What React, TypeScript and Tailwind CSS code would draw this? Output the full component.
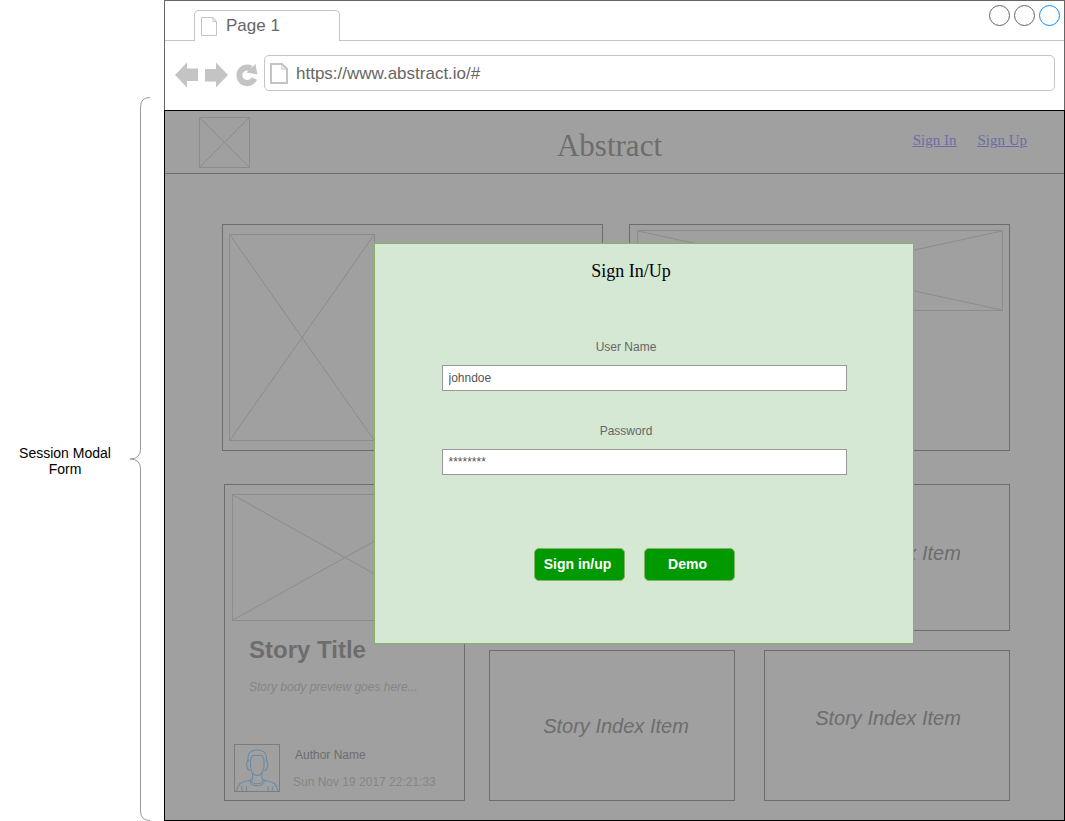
import type { ReactNode } from 'react';

function Placeholder({ className }: { className: string }) {
  return (
    <div className={`border border-[#8c8c8c] ${className}`}>
      <svg className="block h-full w-full" viewBox="0 0 100 100" preserveAspectRatio="none" aria-hidden="true">
        <path d="M0 0L100 100M100 0L0 100" fill="none" stroke="#8c8c8c" strokeWidth="1" vectorEffect="non-scaling-stroke" />
      </svg>
    </div>
  );
}

function TabPageIcon() {
  return (
    <svg className="h-[19px] w-[17px]" viewBox="0 0 17 19" fill="none" stroke="#c4c4c4" aria-hidden="true">
      <path d="M0.500 0.500H12L15.500 4.500V18.500H0.500ZM12 0.500V4.500H15.500" />
    </svg>
  );
}

function AddressPageIcon() {
  return (
    <svg className="h-[21px] w-[18px] shrink-0" viewBox="0 0 18 21" fill="none" stroke="#c4c4c4" aria-hidden="true">
      <path d="M1 1H12L17 6V20H1Z" strokeWidth="2" />
      <path d="M12 1V6H17" />
    </svg>
  );
}

function Arrow({ className = '' }: { className?: string }) {
  return (
    <svg className={`h-[26px] w-[23px] ${className}`} viewBox="0 0 23 26" fill="#c4c4c4" aria-hidden="true">
      <path d="M0 13L12 0.500V6.500H23V19H12V25.500Z" />
    </svg>
  );
}

function Reload() {
  return (
    <svg className="h-[24px] w-[22px]" viewBox="0 0 22 24" aria-hidden="true">
      <path d="M18.300 15.500A7.800 7.800 0 1 1 15 5.500" fill="none" stroke="#c4c4c4" strokeWidth="6" />
      <path d="M19.500 1L21.500 11.500L10.500 9.500Z" fill="#c4c4c4" />
    </svg>
  );
}

function Avatar() {
  return (
    <svg className="h-[48px] w-[46px] shrink-0 border border-[#7c7c7c]" viewBox="0 0 44 46" fill="none" stroke="#6d8aa5" strokeWidth="1.1" aria-hidden="true">
      <path d="M13 17V13C13 7.500 16.500 5 22 5S31.500 7.500 31.500 13V17" />
      <path d="M15.500 19V14.500L17.500 10.500H27L29 14.500V19C29.500 26 26 30.500 22 30.500S15 26 15.500 19Z" />
      <path d="M13.500 15C10.500 17 11.500 25 15 25.500M31 15C34 17 33 25 29.500 25.500" />
      <path d="M17.500 28.500V33.500C16 36.500 9 35.500 5 38.500C3 40.500 2 43 1.500 46M27 28.500V33.500C28.500 36.500 35.500 35.500 39.500 38.500C41.500 40.500 42.500 43 43 46" />
      <path d="M16.500 35C17.500 40 27 40 28 35M15 35.500C16 42.500 28.500 42.500 29.500 35.500M6.500 41.500L7.500 46M11.500 41.500V46M38 41.500L37 46M33 41.500V46" />
    </svg>
  );
}

function IndexItem({ className = '', children }: { className?: string; children?: ReactNode }) {
  return (
    <article className={`flex items-center justify-center border border-[#6d6d6d] text-xl italic ${className}`}>
      {children}
    </article>
  );
}

function Brace() {
  return (
    <div className="flex w-[21px] flex-col">
      <svg className="h-[10px] w-[21px]" viewBox="0 0 21 10" fill="none" stroke="#999" aria-hidden="true">
        <path d="M20 0.500Q10.500 0.500 10.500 10" />
      </svg>
      <div className="ml-[10px] flex-1 border-l border-[#999]" />
      <svg className="h-[20px] w-[21px]" viewBox="0 0 21 20" fill="none" stroke="#999" aria-hidden="true">
        <path d="M10.500 0Q10.500 10 0 10Q10.500 10 10.500 20" />
      </svg>
      <div className="ml-[10px] flex-1 border-l border-[#999]" />
      <svg className="h-[10px] w-[21px]" viewBox="0 0 21 10" fill="none" stroke="#999" aria-hidden="true">
        <path d="M10.500 0Q10.500 9.500 20 9.500" />
      </svg>
    </div>
  );
}

function Field({ id, label, value }: { id: string; label: string; value: string }) {
  return (
    <div className="flex flex-col items-center">
      <label htmlFor={id} className="pr-9 text-xs text-[#666]">
        {label}
      </label>
      <input
        id={id}
        type="text"
        defaultValue={value}
        autoComplete="off"
        className="mt-[10px] h-[26px] w-[405px] border border-[#999] bg-white px-[6px] text-xs text-[#555] outline-none"
      />
    </div>
  );
}

function GreenButton({ children, type }: { children: ReactNode; type: 'submit' | 'button' }) {
  return (
    <button type={type} className="h-[33px] w-[91px] rounded-[5px] border border-[#82b366] bg-[#009900] pr-1 pb-[2px] text-sm font-bold text-white">
      {children}
    </button>
  );
}

function SessionModal() {
  return (
    <div className="absolute inset-x-0 top-[132px] flex justify-center pl-[59px]">
      <form
        role="dialog"
        aria-labelledby="session-title"
        onSubmit={(event) => event.preventDefault()}
        className="flex h-[401px] w-[540px] flex-col border border-[#82b366] bg-[#d5e8d4]"
      >
        <h2 id="session-title" className="pt-[15px] pr-[26px] text-center font-['Liberation_Serif',serif] text-lg leading-6 text-black">
          Sign In/Up
        </h2>
        <div className="mt-[56px] flex flex-col gap-8">
          <Field id="user-name" label="User Name" value="johndoe" />
          <Field id="password" label="Password" value="********" />
        </div>
        <div className="mt-[73px] flex justify-center gap-[19px] pr-[19px]">
          <GreenButton type="submit">Sign in/up</GreenButton>
          <GreenButton type="button">Demo</GreenButton>
        </div>
      </form>
    </div>
  );
}

export default function App() {
  return (
    <div className="flex min-h-screen bg-white font-['Liberation_Sans',Arial,sans-serif]">
      <aside className="flex w-[164px] shrink-0 items-stretch pt-[97px]">
        <p className="flex w-[130px] items-center justify-center pt-1 text-center text-sm leading-4 text-black">
          <span>
            Session Modal
            <br />
            Form
          </span>
        </p>
        <Brace />
      </aside>

      <div className="flex min-w-0 flex-1 flex-col">
        <div className="border-x border-t border-[#666] text-[17px] text-[#666]">
          <div className="flex h-10 items-end">
            <div className="w-[29px] border-b border-[#c4c4c4]" />
            <div className="flex h-[31px] w-[146px] items-center gap-2 rounded-t-[5px] border-x border-t border-[#c4c4c4] pl-[6px]">
              <TabPageIcon />
              Page 1
            </div>
            <div className="flex h-10 flex-1 items-start justify-end gap-1 border-b border-[#c4c4c4] pt-1 pr-1">
              <span className="h-[21px] w-[21px] rounded-full border border-[#666]" />
              <span className="h-[21px] w-[21px] rounded-full border border-[#666]" />
              <span className="h-[21px] w-[21px] rounded-full border border-[#0a8cff]" />
            </div>
          </div>
          <div className="flex items-center pt-[14px] pr-[9px] pb-[19px] pl-[10px]">
            <div className="flex items-center pt-[3px]">
              <button type="button" aria-label="Back">
                <Arrow />
              </button>
              <button type="button" aria-label="Forward" className="ml-[7px]">
                <Arrow className="rotate-180" />
              </button>
              <button type="button" aria-label="Reload" className="ml-2">
                <Reload />
              </button>
            </div>
            <div className="ml-[6px] flex h-9 flex-1 items-center gap-2 rounded-[5px] border border-[#c4c4c4] pl-[5px]">
              <AddressPageIcon />
              <input
                type="text"
                aria-label="Address"
                defaultValue="https://www.abstract.io/#"
                className="min-w-0 flex-1 bg-transparent pt-[2px] outline-none"
              />
            </div>
          </div>
        </div>

        <div className="relative flex-1 border border-black bg-[#a0a0a0] text-[#6d6d6d]">
          <header className="grid h-[63px] grid-cols-[1fr_auto_1fr] items-center border-b border-[#6d6d6d] pr-[37px] pl-[34px]">
            <Placeholder className="h-[51px] w-[51px]" />
            <h1 className="pt-2 pr-[7px] font-['Liberation_Serif',serif] text-[31px] leading-9">Abstract</h1>
            <nav className="flex justify-end gap-[21px] pb-1 font-['Liberation_Serif',serif] text-[15px] leading-5 text-[#6c6ca8] underline">
              <a href="#sign-in">Sign In</a>
              <a href="#sign-up">Sign Up</a>
            </nav>
          </header>

          <main className="pt-[50px] pr-[54px] pb-[19px] pl-[57px]">
            <div className="grid grid-cols-2 gap-[26px]">
              <article className="h-[227px] border border-[#6d6d6d] pt-[9px] pl-[6px]">
                <Placeholder className="h-[207px] w-[146px]" />
              </article>
              <article className="h-[227px] border border-[#6d6d6d] pt-[5px] pr-[6px] pl-[7px]">
                <Placeholder className="h-[81px]" />
              </article>
            </div>

            <div className="mt-[33px] grid grid-cols-[241fr_521fr] gap-6 pl-[2px]">
              <article className="flex h-[317px] min-w-0 flex-col border border-[#6d6d6d] pt-[9px]">
                <Placeholder className="mr-[6px] ml-[7px] h-[127px]" />
                <h2 className="mt-[15px] pl-6 text-2xl leading-7 font-bold">Story Title</h2>
                <p className="mt-[15px] pl-6 text-xs text-[#858585] italic">Story body preview goes here...</p>
                <div className="mt-auto flex gap-[13px] pb-2 pl-[9px]">
                  <Avatar />
                  <div className="flex flex-col gap-[11px] pt-[3px] text-xs whitespace-nowrap">
                    <p className="pl-[2px]">Author Name</p>
                    <p className="text-[#858585]">Sun Nov 19 2017 22:21:33</p>
                  </div>
                </div>
              </article>
              <div className="grid min-w-0 grid-cols-2 grid-rows-[147px_151px] gap-x-[29px] gap-y-[19px]">
                <IndexItem />
                <IndexItem className="pb-[10px] pl-[2px]">Story Index Item</IndexItem>
                <IndexItem className="pl-2">Story Index Item</IndexItem>
                <IndexItem className="pb-4 pl-[2px]">Story Index Item</IndexItem>
              </div>
            </div>
          </main>

          <SessionModal />
        </div>
      </div>
    </div>
  );
}
